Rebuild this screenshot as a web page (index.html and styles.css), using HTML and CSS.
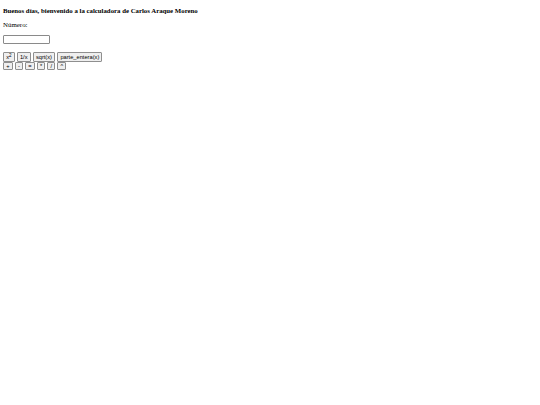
FILE: index.html
```html
<!DOCTYPE html>
<html lang="es">
<head>
<meta charset="utf-8">
<title>Calculadora</title>
<link rel="stylesheet" href="styles.css">
</head>
<body class="page">
<h4 class="title">Buenos días, bienvenido a la calculadora de Carlos Araque Moreno</h4>
<p class="label">Número:</p>
<div class="field-row"><input class="num" type="text"></div>
<div class="ops ops-first">
<button class="btn">x<sup class="sup">2</sup></button>
<button class="btn">1/x</button>
<button class="btn">sqrt(x)</button>
<button class="btn">parte_entera(x)</button>
</div>
<div class="ops">
<button class="btn">+</button>
<button class="btn">-</button>
<button class="btn">=</button>
<button class="btn">*</button>
<button class="btn">/</button>
<button class="btn">^</button>
</div>
</body>
</html>
```
FILE: styles.css
```css
html { background: #fff; }
.page {
  margin: 0;
  padding: 0 3px;
  font-family: "Liberation Serif", "Times New Roman", serif;
  font-size: 6.9px;
  line-height: 8px;
  color: #000;
}
.title {
  font-size: 6.8px;
  font-weight: bold;
  line-height: 8px;
  margin: 7px 0 0;
}
.label {
  margin: 6px 0 0;
  line-height: 8px;
}
.field-row {
  margin: 6px 0 0;
  height: 9px;
  line-height: 0;
}
.num {
  box-sizing: border-box;
  width: 47px;
  height: 9px;
  margin: 0;
  padding: 0 1px;
  border: 1px solid #8a8a8a;
  border-radius: 1px;
  background: #fff;
  font-family: "Liberation Sans", Arial, sans-serif;
  font-size: 5.7px;
}
.ops {
  display: flex;
  gap: 2px;
  height: 8px;
}
.ops-first {
  margin-top: 8px;
  height: 9.5px;
  margin-bottom: 0.3px;
}
.btn {
  box-sizing: border-box;
  height: 100%;
  margin: 0;
  padding: 0 2.2px;
  border: 1px solid #8f8f8f;
  border-radius: 1px;
  background: #efefef;
  color: #000;
  font-family: "Liberation Sans", Arial, sans-serif;
  font-size: 5.7px;
  line-height: 6px;
}
.sup {
  font-size: 4.5px;
  vertical-align: 2px;
  line-height: 0;
}
```
